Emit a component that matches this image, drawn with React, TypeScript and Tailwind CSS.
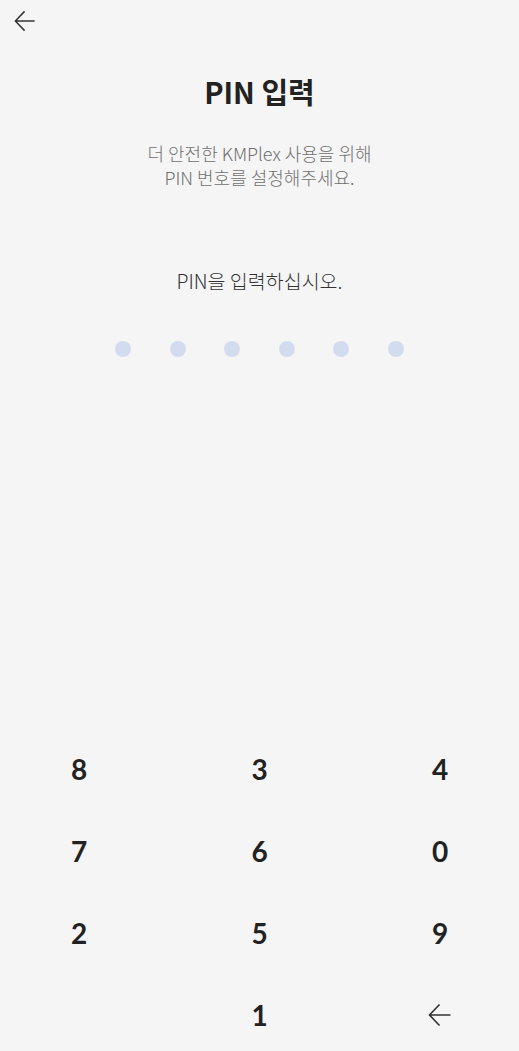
const keys = [
  ['8', '3', '4'],
  ['7', '6', '0'],
  ['2', '5', '9'],
]

const ArrowLeft = ({ className }: { className?: string }) => (
  <svg viewBox="0 0 24 24" className={className} fill="none" stroke="currentColor" strokeWidth={1.6}>
    <path d="M22.5 12H1.5M11.5 1.5L1.5 12l10 10.5" />
  </svg>
)

export default function App() {
  return (
    <div className="h-[1051px] overflow-hidden bg-[#f5f5f5] font-['Noto_Sans_CJK_KR',sans-serif]">
      <div className="h-[41px] pl-[14px] pt-[10px] text-[#333]">
        <ArrowLeft className="h-[22px] w-[22px]" />
      </div>

      <h1 className="mt-[30px] text-center text-[29px] font-bold leading-[40px] text-[#222]">PIN 입력</h1>

      <p className="mt-[30px] text-center text-[18px] font-light leading-[24px] text-[#707070]">
        더 안전한 KMPlex 사용을 위해
        <br />
        PIN 번호를 설정해주세요.
      </p>

      <p className="mt-[79px] text-center text-[19.5px] font-light leading-[26px] text-[#333]">PIN을 입력하십시오.</p>

      <div className="mt-[47px] flex justify-center gap-[38.5px]">
        {Array.from({ length: 6 }).map((_, i) => (
          <div key={i} className="h-[16px] w-[16px] rounded-full bg-[#d3dcee]" />
        ))}
      </div>

      <div className="mt-[371px] px-[49px] font-['Lato',sans-serif] text-[28px] font-bold text-[#222]">
        {keys.map((row, r) => (
          <div key={r} className="flex h-[82px] items-center justify-between">
            {row.map((k) => (
              <div key={k} className="w-[60px] text-center">
                {k}
              </div>
            ))}
          </div>
        ))}
        <div className="flex h-[82px] items-center justify-between">
          <div className="w-[60px]" />
          <div className="w-[60px] text-center">1</div>
          <div className="flex w-[60px] justify-center text-[#333]">
            <ArrowLeft className="h-[24px] w-[24px]" />
          </div>
        </div>
      </div>
    </div>
  )
}
